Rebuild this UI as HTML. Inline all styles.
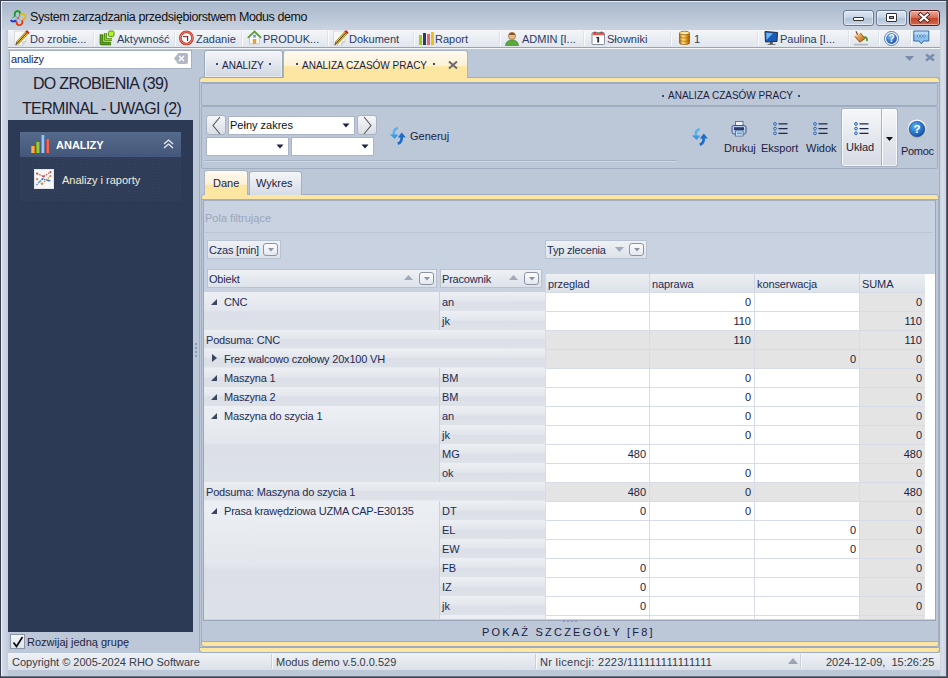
<!DOCTYPE html>
<html><head><meta charset="utf-8">
<style>
*{box-sizing:border-box;margin:0;padding:0}
html,body{width:948px;height:678px;overflow:hidden;background:#bcc7d8;font-family:"Liberation Sans",sans-serif;font-size:11px;color:#26345a}
.a{position:absolute}
.t{position:absolute;white-space:nowrap;line-height:1}
svg{position:absolute;overflow:visible}
</style></head><body>

<div class="a" style="left:0;top:0;width:948px;height:678px;background:#bcc7d8;border:1px solid #3a4252"></div>
<div class="a" style="left:1px;top:1px;width:946px;height:1px;background:#e9eef5"></div>
<div class="a" style="left:1px;top:1px;width:1px;height:676px;background:#eef2f7"></div>
<div class="a" style="left:2px;top:30px;width:6px;height:646px;background:linear-gradient(90deg,#d6dde8,#c3cddc)"></div>
<div class="a" style="left:1px;top:676px;width:946px;height:1px;background:#6a7282"></div>
<div class="a" style="left:946px;top:1px;width:1px;height:676px;background:#5a6272"></div>
<div class="a" style="left:2px;top:2px;width:944px;height:28px;background:linear-gradient(#a9b7cb,#c9d3e0)"></div>
<svg style="left:7px;top:7px" width="22" height="22" viewBox="0 0 24 24">
<path d="M9.5 10.5 L14 13.5 M13.8 9.8 L10.5 14" stroke="#a06a50" stroke-width="1" fill="none"/>
<path d="M5.5 12 L8 11 M13 10 L14.5 8" stroke="#3a8a9a" stroke-width=".9" fill="none"/>
<path d="M8.6 10.6 C7.6 6.4 9.6 4.2 11.6 4.3 C13.8 4.4 14.6 6.2 14.2 8.4" fill="none" stroke="#1a9a2a" stroke-width="2.1"/>
<path d="M14.6 8.2 C16 6.8 19.6 7 20.2 10 C20.6 12.2 19 13.6 16.8 13.4" fill="none" stroke="#e8b810" stroke-width="2.1"/>
<path d="M16.2 14.4 C17.4 16 17 19.8 13.4 19.8 C11 19.8 10 17.8 10.6 15.6" fill="none" stroke="#e04010" stroke-width="2.1"/>
<path d="M9.8 14.2 C8.6 16.4 5.2 16.4 4.2 14.2" fill="none" stroke="#1a3ad0" stroke-width="2.2"/>
</svg>
<div class="t" style="left:30px;top:11px;font-size:12.5px;letter-spacing:-0.4px;color:#111">System zarządzania przedsiębiorstwem Modus demo</div>
<div class="a" style="left:843px;top:10px;width:31px;height:16px;border:1px solid #6a7a92;border-radius:3px;background:linear-gradient(#dfe7f1 0%,#c9d6e6 45%,#b3c4d9 55%,#c8d6e6 100%);box-shadow:inset 0 0 0 1px rgba(255,255,255,.45)"></div>
<div class="a" style="left:876px;top:10px;width:31px;height:16px;border:1px solid #6a7a92;border-radius:3px;background:linear-gradient(#dfe7f1 0%,#c9d6e6 45%,#b3c4d9 55%,#c8d6e6 100%);box-shadow:inset 0 0 0 1px rgba(255,255,255,.45)"></div>
<div class="a" style="left:909px;top:10px;width:31px;height:16px;border:1px solid #5a2020;border-radius:3px;background:linear-gradient(#e9a99a 0%,#d9735f 45%,#c2442a 55%,#d06a4f 100%);box-shadow:inset 0 0 0 1px rgba(255,255,255,.45)"></div>
<div class="a" style="left:853px;top:17px;width:11px;height:4px;background:#fff;border:1px solid #333;border-radius:1px"></div>
<div class="a" style="left:886px;top:13px;width:11px;height:9px;background:#fff;border:1px solid #333;border-radius:1px"></div>
<div class="a" style="left:889px;top:16px;width:5px;height:3px;background:#8fa0b8;border:1px solid #333"></div>
<svg style="left:917px;top:12px" width="15" height="12" viewBox="0 0 15 12"><path d="M3.5 2.5 L10.5 8.5 M10.5 2.5 L3.5 8.5" stroke="#4a2020" stroke-width="3.8" stroke-linecap="square"/><path d="M3.5 2.5 L10.5 8.5 M10.5 2.5 L3.5 8.5" stroke="#fff" stroke-width="2.2" stroke-linecap="square"/></svg>
<div class="a" style="left:8px;top:30px;width:932px;height:17px;background:linear-gradient(#f3f5f8,#e1e6ed)"></div>
<div class="a" style="left:8px;top:47px;width:932px;height:1px;background:#9aa3b2"></div>
<div class="a" style="left:8px;top:48px;width:932px;height:1px;background:#f4f6f9"></div>
<div class="a" style="left:93px;top:31px;width:1px;height:15px;background:#dde2e9"></div>
<div class="a" style="left:94px;top:31px;width:1px;height:15px;background:#fafbfc"></div>
<div class="a" style="left:174px;top:31px;width:1px;height:15px;background:#dde2e9"></div>
<div class="a" style="left:175px;top:31px;width:1px;height:15px;background:#fafbfc"></div>
<div class="a" style="left:241px;top:31px;width:1px;height:15px;background:#dde2e9"></div>
<div class="a" style="left:242px;top:31px;width:1px;height:15px;background:#fafbfc"></div>
<div class="a" style="left:327px;top:31px;width:1px;height:15px;background:#dde2e9"></div>
<div class="a" style="left:328px;top:31px;width:1px;height:15px;background:#fafbfc"></div>
<div class="a" style="left:413px;top:31px;width:1px;height:15px;background:#dde2e9"></div>
<div class="a" style="left:414px;top:31px;width:1px;height:15px;background:#fafbfc"></div>
<div class="a" style="left:499px;top:31px;width:1px;height:15px;background:#dde2e9"></div>
<div class="a" style="left:500px;top:31px;width:1px;height:15px;background:#fafbfc"></div>
<div class="a" style="left:583px;top:31px;width:1px;height:15px;background:#dde2e9"></div>
<div class="a" style="left:584px;top:31px;width:1px;height:15px;background:#fafbfc"></div>
<div class="a" style="left:670px;top:31px;width:1px;height:15px;background:#dde2e9"></div>
<div class="a" style="left:671px;top:31px;width:1px;height:15px;background:#fafbfc"></div>
<div class="a" style="left:757px;top:31px;width:1px;height:15px;background:#dde2e9"></div>
<div class="a" style="left:758px;top:31px;width:1px;height:15px;background:#fafbfc"></div>
<div class="a" style="left:848px;top:31px;width:1px;height:15px;background:#dde2e9"></div>
<div class="a" style="left:849px;top:31px;width:1px;height:15px;background:#fafbfc"></div>
<div class="a" style="left:878px;top:31px;width:1px;height:15px;background:#dde2e9"></div>
<div class="a" style="left:879px;top:31px;width:1px;height:15px;background:#fafbfc"></div>
<div class="a" style="left:910px;top:31px;width:1px;height:15px;background:#dde2e9"></div>
<div class="a" style="left:911px;top:31px;width:1px;height:15px;background:#fafbfc"></div>
<div class="t" style="left:30px;top:34px;font-size:11px;color:#2b3a66">Do zrobie...</div>
<div class="t" style="left:117px;top:34px;font-size:11px;color:#2b3a66">Aktywność</div>
<div class="t" style="left:196px;top:34px;font-size:11px;color:#2b3a66">Zadanie</div>
<div class="t" style="left:263px;top:34px;font-size:11px;color:#2b3a66">PRODUK...</div>
<div class="t" style="left:349px;top:34px;font-size:11px;color:#2b3a66">Dokument</div>
<div class="t" style="left:435px;top:34px;font-size:11px;color:#2b3a66">Raport</div>
<div class="t" style="left:522px;top:34px;font-size:11px;color:#2b3a66">ADMIN [I...</div>
<div class="t" style="left:607px;top:34px;font-size:11px;color:#2b3a66">Słowniki</div>
<div class="t" style="left:694px;top:34px;font-size:11px;color:#2b3a66">1</div>
<div class="t" style="left:780px;top:34px;font-size:11px;color:#2b3a66">Paulina [I...</div>
<svg style="left:14px;top:30px" width="16" height="16" viewBox="0 0 16 16"><path d="M0.5 1 H12 V11.5 L8.5 15.5 H0.5 Z" fill="#f9f9f9" stroke="#d0d0d0" stroke-width=".8"/><path d="M8.5 15.5 L9 12 L12 11.5" fill="#e0e0e0" stroke="#b0b0b0" stroke-width=".7"/><path d="M3 13.5 L13.5 2" stroke="#8a6a10" stroke-width="3.6"/><path d="M3 13.5 L13.5 2" stroke="#f0c430" stroke-width="2.6"/><path d="M3.3 13.2 L13.3 2.2" stroke="#222" stroke-width=".9"/><path d="M12.3 0.8 L14.8 3.2" stroke="#e02020" stroke-width="2.2"/><path d="M1.8 14.8 L3.4 12.4" stroke="#555" stroke-width="1.4"/></svg>
<svg style="left:333px;top:30px" width="16" height="16" viewBox="0 0 16 16"><path d="M0.5 1 H12 V11.5 L8.5 15.5 H0.5 Z" fill="#f9f9f9" stroke="#d0d0d0" stroke-width=".8"/><path d="M8.5 15.5 L9 12 L12 11.5" fill="#e0e0e0" stroke="#b0b0b0" stroke-width=".7"/><path d="M3 13.5 L13.5 2" stroke="#8a6a10" stroke-width="3.6"/><path d="M3 13.5 L13.5 2" stroke="#f0c430" stroke-width="2.6"/><path d="M3.3 13.2 L13.3 2.2" stroke="#222" stroke-width=".9"/><path d="M12.3 0.8 L14.8 3.2" stroke="#e02020" stroke-width="2.2"/><path d="M1.8 14.8 L3.4 12.4" stroke="#555" stroke-width="1.4"/></svg>
<svg style="left:99px;top:30px" width="16" height="16" viewBox="0 0 16 16"><path d="M2.5 4.5 V13.5 H12" fill="none" stroke="#2a5a08" stroke-width="3.6" stroke-linejoin="round"/><path d="M2.5 4.5 V13.5 H12" fill="none" stroke="#5aa818" stroke-width="2.2"/><path d="M6.5 3 V9.5 H13" fill="none" stroke="#3a7010" stroke-width="3.2" stroke-linejoin="round"/><path d="M6.5 3 V9.5 H13" fill="none" stroke="#90d028" stroke-width="1.8"/><rect x="9.5" y="1" width="5.5" height="5.5" rx="1.3" fill="#b8f028" stroke="#4a8a10" stroke-width=".9"/></svg>
<svg style="left:179px;top:30px" width="16" height="16" viewBox="0 0 16 16"><circle cx="7.4" cy="7.9" r="6.1" fill="#fff" stroke="#c83a2a" stroke-width="2.7"/><circle cx="7.4" cy="7.9" r="6.1" fill="none" stroke="#f0a090" stroke-width=".7"/><path d="M4 6.6 H8.6" stroke="#c02828" stroke-width="1.1"/><path d="M8.6 6.1 V10.9" stroke="#2a3560" stroke-width="1.1"/></svg>
<svg style="left:247px;top:30px" width="15" height="15" viewBox="0 0 15 15"><path d="M2.5 7 L2.5 13.8 L12.5 13.8 L12.5 7 L7.5 2.5 Z" fill="#f8f8f8" stroke="#b8bcc4" stroke-width=".7"/><path d="M0.8 7.8 L7.5 1.5 L14.2 7.8" fill="none" stroke="#5aa030" stroke-width="1.7"/><rect x="6.2" y="4.6" width="2.6" height="3" fill="#6a9ae0"/><rect x="5.8" y="9" width="3.4" height="4.8" fill="#e8a030"/></svg>
<svg style="left:418px;top:31px" width="16" height="15" viewBox="0 0 16 15"><rect x="1" y="4" width="3" height="10" fill="#a8c820"/><rect x="5" y="2" width="3" height="12" fill="#2a3a5a"/><rect x="9" y="3" width="3" height="11" fill="#e06a6a"/><rect x="13" y="1" width="3" height="13" fill="#e8c020"/></svg>
<svg style="left:505px;top:31px" width="14" height="15" viewBox="0 0 14 15"><circle cx="7" cy="5" r="3.6" fill="#e8b888" stroke="#8a5a30" stroke-width=".6"/><path d="M4 3 Q7 0 10 3 L10 4 L4 4 Z" fill="#8a5a20"/><path d="M0.5 14.5 Q1 9 7 9 Q13 9 13.5 14.5 Z" fill="#5aaa3a" stroke="#3a7a2a" stroke-width=".6"/></svg>
<svg style="left:591px;top:30px" width="15" height="16" viewBox="0 0 15 16"><rect x="1" y="2.5" width="12.5" height="12" rx="1" fill="#fdfdfd" stroke="#7a8090" stroke-width=".9"/><rect x="1.5" y="3" width="11.5" height="2.2" fill="#e85a4a"/><circle cx="4" cy="2.5" r="1" fill="#c03020"/><circle cx="10.5" cy="2.5" r="1" fill="#c03020"/><rect x="6.3" y="7" width="1.8" height="5.5" fill="#2a2a3a"/><rect x="5.3" y="7" width="2" height="1.2" fill="#2a2a3a"/></svg>
<svg style="left:678px;top:30px" width="13" height="16" viewBox="0 0 13 16"><defs><linearGradient id="dbg" x1="0" x2="1"><stop offset="0" stop-color="#b86a08"/><stop offset=".35" stop-color="#ffe08a"/><stop offset=".6" stop-color="#f0b030"/><stop offset="1" stop-color="#a85a00"/></linearGradient></defs><path d="M1.5 3 V13 C1.5 15 11.5 15 11.5 13 V3 Z" fill="url(#dbg)" stroke="#8a5008" stroke-width=".7"/><ellipse cx="6.5" cy="3" rx="5" ry="1.8" fill="#ffe6a0" stroke="#8a5008" stroke-width=".7"/><path d="M1.5 6.6 C1.5 8.4 11.5 8.4 11.5 6.6 M1.5 10 C1.5 11.8 11.5 11.8 11.5 10" fill="none" stroke="#9a5a08" stroke-width=".6"/></svg>
<svg style="left:764px;top:30px" width="15" height="16" viewBox="0 0 15 16"><path d="M1 1.5 L13.5 2.5 L13 11.5 L1.5 12 Z" fill="#1a5ab8" stroke="#2a2a3a" stroke-width="1"/><path d="M2.2 2.8 L9 3.2 L2.5 10 Z" fill="#6ab8f0"/><path d="M6 12 L8.5 12 L9 14 L5.5 14 Z" fill="#555"/><path d="M3.5 14 H11.5 V15 H3.5 Z" fill="#777"/></svg>
<svg style="left:853px;top:30px" width="16" height="16" viewBox="0 0 16 16"><defs><linearGradient id="pk" x1="0" y1="0" x2="1" y2="1"><stop offset="0" stop-color="#ffd080"/><stop offset="1" stop-color="#b85a10"/></linearGradient></defs><path d="M1.8 6.5 L7.5 3 L12 8.5 L6.8 12.2 Z" fill="url(#pk)" stroke="#7a4010" stroke-width=".8"/><path d="M1.8 6.5 L7.5 3" stroke="#fff2c0" stroke-width="1"/><path d="M4.5 4.8 L3 1.2" stroke="#8a3a20" stroke-width="1.1"/><path d="M11.2 7.2 C13.6 7 14.4 8.6 13.8 11" fill="none" stroke="#3a9a20" stroke-width="1.8"/><rect x="1" y="13.8" width="14" height="1.6" fill="#b4b8be"/></svg>
<svg style="left:884px;top:31px" width="15" height="15" viewBox="0 0 15 15"><defs><radialGradient id="tq" cx=".4" cy=".35" r=".7"><stop offset="0" stop-color="#7ab8f0"/><stop offset="1" stop-color="#1a4ea8"/></radialGradient></defs><circle cx="7.5" cy="7.5" r="7" fill="#fafbfd" stroke="#3a5a98" stroke-width=".8"/><circle cx="7.5" cy="7.5" r="5.4" fill="url(#tq)"/><text x="7.5" y="11.3" font-size="10" font-weight="bold" text-anchor="middle" fill="#fff" font-family="Liberation Sans">?</text></svg>
<svg style="left:913px;top:30px" width="17" height="16" viewBox="0 0 17 16"><path d="M0.8 1 H15.8 V11 H10.5 L8.3 13.8 L6.1 11 H0.8 Z" fill="#8ac2ee" stroke="#2a5a9a" stroke-width=".9"/><rect x="1.5" y="1.7" width="13.6" height="3" fill="#b8dcf8"/><circle cx="5.5" cy="6" r="1.1" fill="#fff" stroke="#2a5a9a" stroke-width=".6"/><circle cx="8.3" cy="6" r="1.1" fill="#fff" stroke="#2a5a9a" stroke-width=".6"/><circle cx="11.1" cy="6" r="1.1" fill="#fff" stroke="#2a5a9a" stroke-width=".6"/></svg>
<div class="a" style="left:9px;top:50px;width:183px;height:19px;background:#fff;border:1px solid #a6b1c3"></div>
<div class="t" style="left:11px;top:54px;font-size:11px;letter-spacing:-0.2px;color:#1c2456">analizy</div>
<div class="a" style="left:174px;top:53px;width:14px;height:11px;background:#b0b8c4;border-radius:3px 2px 2px 3px;clip-path:polygon(30% 0,100% 0,100% 100%,30% 100%,0 50%)"></div>
<svg style="left:178px;top:55px" width="7" height="7" viewBox="0 0 7 7"><path d="M1 1 L6 6 M6 1 L1 6" stroke="#fff" stroke-width="1.4"/></svg>
<div class="t" style="left:33px;top:76px;font-size:16px;letter-spacing:-0.7px;color:#1c2030">DO ZROBIENIA (39)</div>
<div class="t" style="left:22px;top:101px;font-size:16px;letter-spacing:-0.65px;color:#1c2030">TERMINAL - UWAGI (2)</div>
<div class="a" style="left:8px;top:120px;width:185px;height:512px;background:#2c3a56"></div>
<div class="a" style="left:20px;top:132px;width:161px;height:25px;background:linear-gradient(#566a8c,#44577a)"></div>
<div class="a" style="left:20px;top:157px;width:161px;height:44px;background-color:#2e3c58;background-image:radial-gradient(circle at 1px 1px,#35435f 0.6px,transparent 0.8px);background-size:3px 3px"></div>
<svg style="left:30px;top:135px" width="21" height="19" viewBox="0 0 21 19"><defs><linearGradient id="bo" x1="0" x2="1"><stop offset="0" stop-color="#e07a20"/><stop offset=".5" stop-color="#ffc060"/><stop offset="1" stop-color="#d86a10"/></linearGradient><linearGradient id="bg" x1="0" x2="1"><stop offset="0" stop-color="#5a9a10"/><stop offset=".5" stop-color="#b0e050"/><stop offset="1" stop-color="#4a8a10"/></linearGradient><linearGradient id="bb" x1="0" x2="1"><stop offset="0" stop-color="#3a80c8"/><stop offset=".5" stop-color="#c0e0ff"/><stop offset="1" stop-color="#2a60a8"/></linearGradient><linearGradient id="br" x1="0" x2="1"><stop offset="0" stop-color="#c83020"/><stop offset=".5" stop-color="#f88070"/><stop offset="1" stop-color="#a82010"/></linearGradient></defs><rect x="1" y="11" width="4" height="7" fill="url(#bo)"/><rect x="6" y="7" width="4" height="11" fill="url(#bg)"/><rect x="11" y="0" width="4" height="18" fill="url(#bb)"/><rect x="16" y="4" width="4" height="14" fill="url(#br)"/></svg>
<div class="t" style="left:56px;top:140px;font-size:11px;font-weight:bold;color:#fff">ANALIZY</div>
<svg style="left:163px;top:139px" width="11" height="10" viewBox="0 0 11 10"><path d="M1 5 L5.5 1 L10 5 M1 9 L5.5 5 L10 9" fill="none" stroke="#e8ecf2" stroke-width="1.3"/></svg>
<svg style="left:34px;top:169px" width="20" height="20" viewBox="0 0 20 20"><rect x="0" y="0" width="20" height="20" fill="#f6f7f9"/><rect x="0.5" y="0.5" width="19" height="19" fill="none" stroke="#e2e6ec" stroke-width="1"/><g fill="none" stroke-width="1.1" stroke-dasharray="1.6 0.9"><path d="M3 4.5 L9.5 7.5 L16.5 3" stroke="#d04a3a"/><path d="M3 10 L8 15 L16.5 7" stroke="#e0803a"/><path d="M2.5 16 L8.5 10 L14.5 11.5 L17 12" stroke="#3a78c8"/></g><g><circle cx="3" cy="4.5" r="1.1" fill="#d04a3a"/><circle cx="9.5" cy="7.5" r="1.1" fill="#d04a3a"/><circle cx="16.5" cy="3" r="1.1" fill="#d04a3a"/><circle cx="3" cy="10" r="1.1" fill="#e0803a"/><circle cx="8" cy="15" r="1.1" fill="#e0803a"/><circle cx="16.5" cy="7" r="1.1" fill="#e0803a"/><circle cx="8.5" cy="10" r="1.1" fill="#3a78c8"/><circle cx="14.5" cy="11.5" r="1.1" fill="#3a78c8"/></g></svg>
<div class="t" style="left:62px;top:175px;font-size:11px;color:#f2eede">Analizy i raporty</div>
<div class="a" style="left:10px;top:634px;width:15px;height:15px;background:linear-gradient(#f4f6f9,#dfe4eb);border:1px solid #8a96a8"></div>
<svg style="left:12px;top:636px" width="12" height="12" viewBox="0 0 12 12"><path d="M1.5 6.5 L4.5 10.5 L10.5 1" fill="none" stroke="#111" stroke-width="1.8"/></svg>
<div class="t" style="left:27px;top:637px;font-size:11px;color:#1c2540">Rozwijaj jedną grupę</div>
<div class="a" style="left:195px;top:343px;width:2px;height:2px;background:#8a9ab8"></div>
<div class="a" style="left:195px;top:347px;width:2px;height:2px;background:#8a9ab8"></div>
<div class="a" style="left:195px;top:351px;width:2px;height:2px;background:#8a9ab8"></div>
<div class="a" style="left:195px;top:355px;width:2px;height:2px;background:#8a9ab8"></div>
<div class="a" style="left:8px;top:653px;width:932px;height:17px;background:linear-gradient(#eef1f5,#dce1e9)"></div>
<div class="a" style="left:271px;top:654px;width:1px;height:15px;background:#c9d0da"></div>
<div class="a" style="left:272px;top:654px;width:1px;height:15px;background:#f8f9fb"></div>
<div class="a" style="left:535px;top:654px;width:1px;height:15px;background:#c9d0da"></div>
<div class="a" style="left:536px;top:654px;width:1px;height:15px;background:#f8f9fb"></div>
<div class="a" style="left:800px;top:654px;width:1px;height:15px;background:#c9d0da"></div>
<div class="a" style="left:801px;top:654px;width:1px;height:15px;background:#f8f9fb"></div>
<div class="t" style="left:12px;top:657px;font-size:11px;color:#333a4a">Copyright © 2005-2024 RHO Software</div>
<div class="t" style="left:276px;top:657px;font-size:11px;color:#333a4a">Modus demo v.5.0.0.529</div>
<div class="t" style="left:540px;top:657px;font-size:11px;letter-spacing:0.32px;color:#333a4a">Nr licencji: 2223/111111111111111</div>
<div class="t" style="left:826px;top:657px;font-size:11px;color:#333a4a">2024-12-09,&nbsp; 15:26:25</div>
<svg style="left:788px;top:658px" width="10" height="6" viewBox="0 0 10 6"><path d="M0 6 L5 0 L10 6 Z" fill="#9aa4b4"/></svg>
<div class="a" style="left:940px;top:30px;width:6px;height:646px;background:linear-gradient(90deg,#ccd4e0,#d8dfe8 40%,#c8d1de)"></div>
<div class="a" style="left:199px;top:77px;width:741px;height:576px;background:#9fadc2;border-radius:3px"></div>
<div class="a" style="left:200px;top:78px;width:739px;height:574px;background:#fde6a2;border-radius:3px"></div>
<div class="a" style="left:200px;top:82px;width:739px;height:566px;background:#bcc7d8;border-top:1px solid #9eabbf;border-bottom:1px solid #9eabbf"></div>
<div class="a" style="left:204px;top:50px;width:79px;height:28px;border:1px solid #9aa6ba;border-radius:3px 3px 0 0;background:linear-gradient(#f4f6f9,#d0d7e2);box-shadow:inset 0 0 0 1px rgba(255,255,255,.5)"></div>
<div class="a" style="left:216px;top:63px;width:2px;height:2px;background:#3a4a70"></div>
<div class="a" style="left:269px;top:63px;width:2px;height:2px;background:#3a4a70"></div>
<div class="t" style="left:222px;top:61px;font-size:10px;color:#1a2240">ANALIZY</div>
<div class="a" style="left:283px;top:50px;width:185px;height:28px;border:1px solid #a9b4c4;border-bottom:none;border-radius:3px 3px 0 0;background:linear-gradient(#fffaf0 0%,#fdf1d6 55%,#fde6a2 58%,#fde6a2 100%)"></div>
<div class="a" style="left:284px;top:77px;width:183px;height:2px;background:#fde6a2"></div>
<div class="a" style="left:296px;top:63px;width:2px;height:2px;background:#3a4a70"></div>
<div class="a" style="left:433px;top:63px;width:2px;height:2px;background:#3a4a70"></div>
<div class="t" style="left:302px;top:61px;font-size:10px;color:#1a2240">ANALIZA CZASÓW PRACY</div>
<svg style="left:448px;top:61px" width="10" height="8" viewBox="0 0 10 8"><path d="M1 0.5 L9 7.5 M9 0.5 L1 7.5" stroke="#6a6a6a" stroke-width="2"/></svg>
<svg style="left:905px;top:56px" width="9" height="5" viewBox="0 0 9 5"><path d="M0 0 L9 0 L4.5 5 Z" fill="#7a8cab"/></svg>
<svg style="left:925px;top:54px" width="10" height="7" viewBox="0 0 10 7"><path d="M1 0.5 L9 6.5 M9 0.5 L1 6.5" stroke="#7a8cab" stroke-width="2.4"/></svg>
<div class="a" style="left:201px;top:83px;width:737px;height:23px;border:1px solid #a0adc0;border-radius:2px;background:#bcc7d8"></div>
<div class="a" style="left:662px;top:95px;width:2px;height:2px;background:#3a4a70"></div>
<div class="a" style="left:798px;top:95px;width:2px;height:2px;background:#3a4a70"></div>
<div class="t" style="left:668px;top:91px;font-size:10px;color:#1a2240">ANALIZA CZASÓW PRACY</div>
<div class="a" style="left:201px;top:106px;width:737px;height:63px;border:1px solid #a0adc0;border-radius:2px;background:#bcc7d8"></div>
<div class="a" style="left:205px;top:160px;width:472px;height:1px;background:#a6b2c4"></div>
<div class="a" style="left:205px;top:161px;width:472px;height:1px;background:#d2d9e4"></div>
<div class="a" style="left:206px;top:115px;width:20px;height:20px;border:1px solid #a9b3c2;border-radius:3px;background:linear-gradient(#f6f7f9,#d9dee6)"></div>
<svg style="left:211px;top:116px" width="11" height="19" viewBox="0 0 11 19"><path d="M9 1 L2 9.5 L9 18" fill="none" stroke="#555" stroke-width="1.1"/></svg>
<div class="a" style="left:357px;top:115px;width:20px;height:20px;border:1px solid #a9b3c2;border-radius:3px;background:linear-gradient(#f6f7f9,#d9dee6)"></div>
<svg style="left:362px;top:116px" width="11" height="19" viewBox="0 0 11 19"><path d="M2 1 L9 9.5 L2 18" fill="none" stroke="#555" stroke-width="1.1"/></svg>
<div class="a" style="left:228px;top:116px;width:127px;height:19px;background:#fff;border:1px solid #aab4c3"></div>
<div class="t" style="left:230px;top:120px;font-size:11px;color:#111">Pełny zakres</div>
<svg style="left:342px;top:123px" width="8" height="5" viewBox="0 0 8 5"><path d="M0.5 0.5 L7.5 0.5 L4 4.5 Z" fill="#1a2240"/></svg>
<div class="a" style="left:206px;top:137px;width:83px;height:19px;background:#fff;border:1px solid #aab4c3"></div>
<svg style="left:276px;top:144px" width="8" height="5" viewBox="0 0 8 5"><path d="M0.5 0.5 L7.5 0.5 L4 4.5 Z" fill="#1a2240"/></svg>
<div class="a" style="left:291px;top:137px;width:83px;height:19px;background:#fff;border:1px solid #aab4c3"></div>
<svg style="left:361px;top:144px" width="8" height="5" viewBox="0 0 8 5"><path d="M0.5 0.5 L7.5 0.5 L4 4.5 Z" fill="#1a2240"/></svg>
<svg style="left:389px;top:127px" width="18" height="18" viewBox="0 0 18 18"><path d="M8.8 1 C5.5 1.8 4.2 4.5 5 7.8" fill="none" stroke="#5ab2ec" stroke-width="2.6"/><path d="M0.8 7.4 L9.4 7.4 L5.8 12 Z" fill="#3a9ae4"/><path d="M12.6 9.8 C13 13.2 11.8 15.5 8.8 16.8" fill="none" stroke="#1a6cc8" stroke-width="2.6"/><path d="M8.8 10.6 L16.8 10.6 L12.8 5.6 Z" fill="#1a6cc8"/></svg>
<div class="t" style="left:410px;top:131px;font-size:11px;color:#1a2240">Generuj</div>
<svg style="left:691px;top:128px" width="18" height="18" viewBox="0 0 18 18"><path d="M8.8 1 C5.5 1.8 4.2 4.5 5 7.8" fill="none" stroke="#5ab2ec" stroke-width="2.6"/><path d="M0.8 7.4 L9.4 7.4 L5.8 12 Z" fill="#3a9ae4"/><path d="M12.6 9.8 C13 13.2 11.8 15.5 8.8 16.8" fill="none" stroke="#1a6cc8" stroke-width="2.6"/><path d="M8.8 10.6 L16.8 10.6 L12.8 5.6 Z" fill="#1a6cc8"/></svg>
<svg style="left:731px;top:120px" width="16" height="17" viewBox="0 0 16 17"><rect x="4.5" y="1.5" width="7.5" height="7" fill="#eef2f8" stroke="#5a6a90" stroke-width=".9"/><rect x="1" y="5.5" width="14" height="8.5" rx="1.8" fill="#b8d0f0" stroke="#34447a" stroke-width=".9"/><rect x="3" y="7.2" width="10" height="3" fill="#2a3a6a"/><rect x="4.5" y="11" width="7.5" height="5" fill="#fff" stroke="#5a6a90" stroke-width=".9"/><rect x="5.5" y="12.3" width="5.5" height="2.2" fill="#5aa8ea"/></svg>
<svg style="left:772px;top:121px" width="16" height="15" viewBox="0 0 16 15"><circle cx="3" cy="2.9" r="1.4" fill="#a8d8f4" stroke="#2a5aa8" stroke-width=".9"/><circle cx="3" cy="7.6" r="1.4" fill="#a8d8f4" stroke="#2a5aa8" stroke-width=".9"/><circle cx="3" cy="12.3" r="1.4" fill="#a8d8f4" stroke="#2a5aa8" stroke-width=".9"/><path d="M6.5 2.9 H15.5 M6.5 7.6 H15.5 M6.5 12.3 H15.5" stroke="#1a2848" stroke-width="1.3"/></svg>
<svg style="left:812px;top:121px" width="16" height="15" viewBox="0 0 16 15"><circle cx="3" cy="2.9" r="1.4" fill="#a8d8f4" stroke="#2a5aa8" stroke-width=".9"/><circle cx="3" cy="7.6" r="1.4" fill="#a8d8f4" stroke="#2a5aa8" stroke-width=".9"/><circle cx="3" cy="12.3" r="1.4" fill="#a8d8f4" stroke="#2a5aa8" stroke-width=".9"/><path d="M6.5 2.9 H15.5 M6.5 7.6 H15.5 M6.5 12.3 H15.5" stroke="#1a2848" stroke-width="1.3"/></svg>
<div class="a" style="left:841px;top:108px;width:57px;height:59px;border:1px solid #a9b2c0;border-radius:3px;background:linear-gradient(#f6f7f9,#e4e8ee 50%,#d6dbe4);box-shadow:inset 0 0 0 1px rgba(255,255,255,.7)"></div>
<div class="a" style="left:881px;top:109px;width:1px;height:57px;background:#a9b2c0"></div>
<div class="a" style="left:882px;top:109px;width:1px;height:57px;background:#fafbfc"></div>
<svg style="left:853px;top:121px" width="16" height="15" viewBox="0 0 16 15"><circle cx="3" cy="2.9" r="1.4" fill="#a8d8f4" stroke="#2a5aa8" stroke-width=".9"/><circle cx="3" cy="7.6" r="1.4" fill="#a8d8f4" stroke="#2a5aa8" stroke-width=".9"/><circle cx="3" cy="12.3" r="1.4" fill="#a8d8f4" stroke="#2a5aa8" stroke-width=".9"/><path d="M6.5 2.9 H15.5 M6.5 7.6 H15.5 M6.5 12.3 H15.5" stroke="#1a2848" stroke-width="1.3"/></svg>
<svg style="left:886px;top:137px" width="7" height="4" viewBox="0 0 7 4"><path d="M0 0 L7 0 L3.5 4 Z" fill="#111"/></svg>
<svg style="left:907px;top:119px" width="20" height="20" viewBox="0 0 20 20"><defs><radialGradient id="hb" cx=".4" cy=".35" r=".7"><stop offset="0" stop-color="#5ab4f8"/><stop offset="1" stop-color="#0c4aa8"/></radialGradient><linearGradient id="hr" x1="0" y1="0" x2="0" y2="1"><stop offset="0" stop-color="#ffffff"/><stop offset="1" stop-color="#b8b8b8"/></linearGradient></defs><circle cx="10" cy="10" r="9.6" fill="url(#hr)"/><circle cx="10" cy="10" r="7.8" fill="url(#hb)" stroke="#0a3a80" stroke-width=".5"/><text x="10" y="14.3" font-size="11.5" font-weight="bold" text-anchor="middle" fill="#fff" font-family="Liberation Sans">?</text></svg>
<div class="t" style="left:724px;top:143px;font-size:11px;letter-spacing:0;color:#1a2240">Drukuj</div>
<div class="t" style="left:761px;top:143px;font-size:11px;letter-spacing:0;color:#1a2240">Eksport</div>
<div class="t" style="left:806px;top:143px;font-size:11px;letter-spacing:0;color:#1a2240">Widok</div>
<div class="t" style="left:846px;top:142px;font-size:11px;letter-spacing:0;color:#1a2240">Układ</div>
<div class="t" style="left:901px;top:146px;font-size:11px;letter-spacing:-0.3px;color:#1a2240">Pomoc</div>
<div class="a" style="left:201px;top:194px;width:738px;height:453px;background:#fde6a2;border:1px solid #a0adc0;border-radius:3px"></div>
<div class="a" style="left:202px;top:199px;width:736px;height:443px;background:#bcc7d8;border-top:1px solid #a0adc0;border-bottom:1px solid #a0adc0"></div>
<div class="a" style="left:204px;top:170px;width:44px;height:25px;border:1px solid #a9b4c4;border-bottom:none;border-radius:3px 3px 0 0;background:linear-gradient(#fffaf0 0%,#fdf1d6 55%,#fde6a2 60%,#fde6a2 100%)"></div>
<div class="a" style="left:249px;top:171px;width:53px;height:24px;border:1px solid #a6b2c4;border-bottom:none;border-radius:3px 3px 0 0;background:linear-gradient(#f4f6f9,#d5dbe5)"></div>
<div class="t" style="left:213px;top:178px;font-size:11px;color:#1a2240">Dane</div>
<div class="t" style="left:256px;top:178px;font-size:11px;color:#1a2240">Wykres</div>
<div class="a" style="left:203px;top:199px;width:733px;height:422px;background:#c9d2e0;border:1px solid #9aa7bb;border-top:2px solid #a4b0c2"></div>
<div class="t" style="left:205px;top:213px;font-size:11px;color:#9aa6ba">Pola filtrujące</div>
<div class="a" style="left:205px;top:232px;width:728px;height:1px;background:#bcc5d3"></div>
<div class="a" style="left:207px;top:240px;width:74px;height:19px;border:1px solid #b9c2d0;background:linear-gradient(#eef1f5,#dde2ea)"></div>
<div class="t" style="left:209px;top:245px;font-size:11px;letter-spacing:-0.2px;color:#1f2c52">Czas [min]</div>
<div class="a" style="left:263px;top:243px;width:15px;height:13px;border:1px solid #8a94a4;border-radius:3px;background:linear-gradient(#fafbfc,#e4e8ee)"></div>
<svg style="left:268px;top:248px" width="6" height="4" viewBox="0 0 6 4"><path d="M0 0 L6 0 L3 3.5 Z" fill="#8a94a4"/></svg>
<div class="a" style="left:545px;top:240px;width:102px;height:19px;border:1px solid #b9c2d0;background:linear-gradient(#eef1f5,#dde2ea)"></div>
<div class="t" style="left:547px;top:245px;font-size:11px;letter-spacing:-0.2px;color:#1f2c52">Typ zlecenia</div>
<svg style="left:615px;top:247px" width="9" height="5" viewBox="0 0 9 5"><path d="M0 0 L9 0 L4.5 5 Z" fill="#a0aab8"/></svg>
<div class="a" style="left:629px;top:243px;width:15px;height:13px;border:1px solid #8a94a4;border-radius:3px;background:linear-gradient(#fafbfc,#e4e8ee)"></div>
<svg style="left:634px;top:248px" width="6" height="4" viewBox="0 0 6 4"><path d="M0 0 L6 0 L3 3.5 Z" fill="#8a94a4"/></svg>
<div class="a" style="left:207px;top:269px;width:230px;height:19px;border:1px solid #b9c2d0;background:linear-gradient(#eef1f5,#dde2ea)"></div>
<div class="t" style="left:209px;top:274px;font-size:11px;letter-spacing:-0.2px;color:#1f2c52">Obiekt</div>
<svg style="left:404px;top:275px" width="9" height="5" viewBox="0 0 9 5"><path d="M0 5 L9 5 L4.5 0 Z" fill="#a0aab8"/></svg>
<div class="a" style="left:419px;top:272px;width:15px;height:13px;border:1px solid #8a94a4;border-radius:3px;background:linear-gradient(#fafbfc,#e4e8ee)"></div>
<svg style="left:424px;top:277px" width="6" height="4" viewBox="0 0 6 4"><path d="M0 0 L6 0 L3 3.5 Z" fill="#8a94a4"/></svg>
<div class="a" style="left:440px;top:269px;width:102px;height:19px;border:1px solid #b9c2d0;background:linear-gradient(#eef1f5,#dde2ea)"></div>
<div class="t" style="left:442px;top:274px;font-size:11px;letter-spacing:-0.2px;color:#1f2c52">Pracownik</div>
<svg style="left:509px;top:275px" width="9" height="5" viewBox="0 0 9 5"><path d="M0 5 L9 5 L4.5 0 Z" fill="#a0aab8"/></svg>
<div class="a" style="left:524px;top:272px;width:15px;height:13px;border:1px solid #8a94a4;border-radius:3px;background:linear-gradient(#fafbfc,#e4e8ee)"></div>
<svg style="left:529px;top:277px" width="6" height="4" viewBox="0 0 6 4"><path d="M0 0 L6 0 L3 3.5 Z" fill="#8a94a4"/></svg>
<div class="a" style="left:545px;top:274px;width:104px;height:18px;background:linear-gradient(#eceff3,#dde2ea);border-left:1px solid #d0d6df"></div>
<div class="t" style="left:548px;top:279px;font-size:11px;letter-spacing:-0.1px;color:#1f2c52">przeglad</div>
<div class="a" style="left:649px;top:274px;width:105px;height:18px;background:linear-gradient(#eceff3,#dde2ea);border-left:1px solid #d0d6df"></div>
<div class="t" style="left:652px;top:279px;font-size:11px;letter-spacing:-0.1px;color:#1f2c52">naprawa</div>
<div class="a" style="left:754px;top:274px;width:105px;height:18px;background:linear-gradient(#eceff3,#dde2ea);border-left:1px solid #d0d6df"></div>
<div class="t" style="left:757px;top:279px;font-size:11px;letter-spacing:-0.1px;color:#1f2c52">konserwacja</div>
<div class="a" style="left:859px;top:274px;width:66px;height:18px;background:linear-gradient(#eceff3,#dde2ea);border-left:1px solid #d0d6df"></div>
<div class="t" style="left:862px;top:279px;font-size:11px;letter-spacing:-0.1px;color:#1f2c52">SUMA</div>
<div class="a" style="left:925px;top:274px;width:10px;height:345px;background:#fff"></div>
<div style="position:absolute;left:204px;top:292px;width:732px;height:327px;overflow:hidden">
<div class="a" style="left:0;top:0px;width:235px;height:38px;background:linear-gradient(#eceff3 0%,#e3e7ed 48%,#dcdfe7 52%,#dde1e8 100%)"></div>
<div class="t" style="left:20px;top:5px;font-size:11px;letter-spacing:-0.2px;color:#1f2c52">CNC</div>
<svg style="left:7px;top:7px" width="6" height="6" viewBox="0 0 6 6"><path d="M6 0 L6 6 L0 6 Z" fill="#3a4660"/></svg>
<div class="a" style="left:236px;top:0px;width:105px;height:19px;background:linear-gradient(#eceff3 0%,#e3e7ed 48%,#dcdfe7 52%,#dde1e8 100%)"></div>
<div class="t" style="left:238px;top:5px;font-size:11px;color:#1f2c52">an</div>
<div class="a" style="left:341px;top:0px;width:104px;height:19px;background:#fff;border-left:1px solid #d8dce6;border-top:1px solid #d8dce6"></div>
<div class="a" style="left:445px;top:0px;width:105px;height:19px;background:#fff;border-left:1px solid #d8dce6;border-top:1px solid #d8dce6"></div>
<div class="t" style="left:445px;top:5px;width:102px;text-align:right;font-size:11px;color:#1a2240">0</div>
<div class="a" style="left:550px;top:0px;width:105px;height:19px;background:#fff;border-left:1px solid #d8dce6;border-top:1px solid #d8dce6"></div>
<div class="a" style="left:655px;top:0px;width:66px;height:19px;background:#e4e4e4;border-left:1px solid #d8dce6;border-top:1px solid #d8dce6"></div>
<div class="t" style="left:655px;top:5px;width:63px;text-align:right;font-size:11px;color:#1a2240">0</div>
<div class="a" style="left:236px;top:19px;width:105px;height:19px;background:linear-gradient(#eceff3 0%,#e3e7ed 48%,#dcdfe7 52%,#dde1e8 100%)"></div>
<div class="t" style="left:238px;top:24px;font-size:11px;color:#1f2c52">jk</div>
<div class="a" style="left:341px;top:19px;width:104px;height:19px;background:#fff;border-left:1px solid #d8dce6;border-top:1px solid #d8dce6"></div>
<div class="a" style="left:445px;top:19px;width:105px;height:19px;background:#fff;border-left:1px solid #d8dce6;border-top:1px solid #d8dce6"></div>
<div class="t" style="left:445px;top:24px;width:102px;text-align:right;font-size:11px;color:#1a2240">110</div>
<div class="a" style="left:550px;top:19px;width:105px;height:19px;background:#fff;border-left:1px solid #d8dce6;border-top:1px solid #d8dce6"></div>
<div class="a" style="left:655px;top:19px;width:66px;height:19px;background:#e4e4e4;border-left:1px solid #d8dce6;border-top:1px solid #d8dce6"></div>
<div class="t" style="left:655px;top:24px;width:63px;text-align:right;font-size:11px;color:#1a2240">110</div>
<div class="a" style="left:0;top:38px;width:341px;height:19px;background:linear-gradient(#eceff3 0%,#e3e7ed 48%,#dcdfe7 52%,#dde1e8 100%);border-bottom:1px solid #e6e9ee"></div>
<div class="t" style="left:2px;top:43px;font-size:11px;letter-spacing:-0.2px;color:#1f2c52">Podsuma: CNC</div>
<div class="a" style="left:341px;top:38px;width:104px;height:19px;background:#e4e4e4;border-left:1px solid #d8dce6;border-top:1px solid #d8dce6"></div>
<div class="a" style="left:445px;top:38px;width:105px;height:19px;background:#e4e4e4;border-left:1px solid #d8dce6;border-top:1px solid #d8dce6"></div>
<div class="t" style="left:445px;top:43px;width:102px;text-align:right;font-size:11px;color:#1a2240">110</div>
<div class="a" style="left:550px;top:38px;width:105px;height:19px;background:#e4e4e4;border-left:1px solid #d8dce6;border-top:1px solid #d8dce6"></div>
<div class="a" style="left:655px;top:38px;width:66px;height:19px;background:#e4e4e4;border-left:1px solid #d8dce6;border-top:1px solid #d8dce6"></div>
<div class="t" style="left:655px;top:43px;width:63px;text-align:right;font-size:11px;color:#1a2240">110</div>
<div class="a" style="left:0;top:57px;width:341px;height:19px;background:linear-gradient(#eceff3 0%,#e3e7ed 48%,#dcdfe7 52%,#dde1e8 100%);border-bottom:1px solid #e6e9ee"></div>
<div class="t" style="left:20px;top:62px;font-size:11px;letter-spacing:-0.2px;color:#1f2c52">Frez walcowo czołowy 20x100 VH</div>
<svg style="left:8px;top:62px" width="5" height="8" viewBox="0 0 5 8"><path d="M0 0 L5 4 L0 8 Z" fill="#3a4660"/></svg>
<div class="a" style="left:341px;top:57px;width:104px;height:19px;background:#e4e4e4;border-left:1px solid #d8dce6;border-top:1px solid #d8dce6"></div>
<div class="a" style="left:445px;top:57px;width:105px;height:19px;background:#e4e4e4;border-left:1px solid #d8dce6;border-top:1px solid #d8dce6"></div>
<div class="a" style="left:550px;top:57px;width:105px;height:19px;background:#e4e4e4;border-left:1px solid #d8dce6;border-top:1px solid #d8dce6"></div>
<div class="t" style="left:550px;top:62px;width:102px;text-align:right;font-size:11px;color:#1a2240">0</div>
<div class="a" style="left:655px;top:57px;width:66px;height:19px;background:#e4e4e4;border-left:1px solid #d8dce6;border-top:1px solid #d8dce6"></div>
<div class="t" style="left:655px;top:62px;width:63px;text-align:right;font-size:11px;color:#1a2240">0</div>
<div class="a" style="left:0;top:76px;width:235px;height:19px;background:linear-gradient(#eceff3 0%,#e3e7ed 48%,#dcdfe7 52%,#dde1e8 100%)"></div>
<div class="t" style="left:20px;top:81px;font-size:11px;letter-spacing:-0.2px;color:#1f2c52">Maszyna 1</div>
<svg style="left:7px;top:83px" width="6" height="6" viewBox="0 0 6 6"><path d="M6 0 L6 6 L0 6 Z" fill="#3a4660"/></svg>
<div class="a" style="left:236px;top:76px;width:105px;height:19px;background:linear-gradient(#eceff3 0%,#e3e7ed 48%,#dcdfe7 52%,#dde1e8 100%)"></div>
<div class="t" style="left:238px;top:81px;font-size:11px;color:#1f2c52">BM</div>
<div class="a" style="left:341px;top:76px;width:104px;height:19px;background:#fff;border-left:1px solid #d8dce6;border-top:1px solid #d8dce6"></div>
<div class="a" style="left:445px;top:76px;width:105px;height:19px;background:#fff;border-left:1px solid #d8dce6;border-top:1px solid #d8dce6"></div>
<div class="t" style="left:445px;top:81px;width:102px;text-align:right;font-size:11px;color:#1a2240">0</div>
<div class="a" style="left:550px;top:76px;width:105px;height:19px;background:#fff;border-left:1px solid #d8dce6;border-top:1px solid #d8dce6"></div>
<div class="a" style="left:655px;top:76px;width:66px;height:19px;background:#e4e4e4;border-left:1px solid #d8dce6;border-top:1px solid #d8dce6"></div>
<div class="t" style="left:655px;top:81px;width:63px;text-align:right;font-size:11px;color:#1a2240">0</div>
<div class="a" style="left:0;top:95px;width:235px;height:19px;background:linear-gradient(#eceff3 0%,#e3e7ed 48%,#dcdfe7 52%,#dde1e8 100%)"></div>
<div class="t" style="left:20px;top:100px;font-size:11px;letter-spacing:-0.2px;color:#1f2c52">Maszyna 2</div>
<svg style="left:7px;top:102px" width="6" height="6" viewBox="0 0 6 6"><path d="M6 0 L6 6 L0 6 Z" fill="#3a4660"/></svg>
<div class="a" style="left:236px;top:95px;width:105px;height:19px;background:linear-gradient(#eceff3 0%,#e3e7ed 48%,#dcdfe7 52%,#dde1e8 100%)"></div>
<div class="t" style="left:238px;top:100px;font-size:11px;color:#1f2c52">BM</div>
<div class="a" style="left:341px;top:95px;width:104px;height:19px;background:#fff;border-left:1px solid #d8dce6;border-top:1px solid #d8dce6"></div>
<div class="a" style="left:445px;top:95px;width:105px;height:19px;background:#fff;border-left:1px solid #d8dce6;border-top:1px solid #d8dce6"></div>
<div class="t" style="left:445px;top:100px;width:102px;text-align:right;font-size:11px;color:#1a2240">0</div>
<div class="a" style="left:550px;top:95px;width:105px;height:19px;background:#fff;border-left:1px solid #d8dce6;border-top:1px solid #d8dce6"></div>
<div class="a" style="left:655px;top:95px;width:66px;height:19px;background:#e4e4e4;border-left:1px solid #d8dce6;border-top:1px solid #d8dce6"></div>
<div class="t" style="left:655px;top:100px;width:63px;text-align:right;font-size:11px;color:#1a2240">0</div>
<div class="a" style="left:0;top:114px;width:235px;height:76px;background:linear-gradient(#eceff3 0%,#e3e7ed 48%,#dcdfe7 52%,#dde1e8 100%)"></div>
<div class="t" style="left:20px;top:119px;font-size:11px;letter-spacing:-0.2px;color:#1f2c52">Maszyna do szycia 1</div>
<svg style="left:7px;top:121px" width="6" height="6" viewBox="0 0 6 6"><path d="M6 0 L6 6 L0 6 Z" fill="#3a4660"/></svg>
<div class="a" style="left:236px;top:114px;width:105px;height:19px;background:linear-gradient(#eceff3 0%,#e3e7ed 48%,#dcdfe7 52%,#dde1e8 100%)"></div>
<div class="t" style="left:238px;top:119px;font-size:11px;color:#1f2c52">an</div>
<div class="a" style="left:341px;top:114px;width:104px;height:19px;background:#fff;border-left:1px solid #d8dce6;border-top:1px solid #d8dce6"></div>
<div class="a" style="left:445px;top:114px;width:105px;height:19px;background:#fff;border-left:1px solid #d8dce6;border-top:1px solid #d8dce6"></div>
<div class="t" style="left:445px;top:119px;width:102px;text-align:right;font-size:11px;color:#1a2240">0</div>
<div class="a" style="left:550px;top:114px;width:105px;height:19px;background:#fff;border-left:1px solid #d8dce6;border-top:1px solid #d8dce6"></div>
<div class="a" style="left:655px;top:114px;width:66px;height:19px;background:#e4e4e4;border-left:1px solid #d8dce6;border-top:1px solid #d8dce6"></div>
<div class="t" style="left:655px;top:119px;width:63px;text-align:right;font-size:11px;color:#1a2240">0</div>
<div class="a" style="left:236px;top:133px;width:105px;height:19px;background:linear-gradient(#eceff3 0%,#e3e7ed 48%,#dcdfe7 52%,#dde1e8 100%)"></div>
<div class="t" style="left:238px;top:138px;font-size:11px;color:#1f2c52">jk</div>
<div class="a" style="left:341px;top:133px;width:104px;height:19px;background:#fff;border-left:1px solid #d8dce6;border-top:1px solid #d8dce6"></div>
<div class="a" style="left:445px;top:133px;width:105px;height:19px;background:#fff;border-left:1px solid #d8dce6;border-top:1px solid #d8dce6"></div>
<div class="t" style="left:445px;top:138px;width:102px;text-align:right;font-size:11px;color:#1a2240">0</div>
<div class="a" style="left:550px;top:133px;width:105px;height:19px;background:#fff;border-left:1px solid #d8dce6;border-top:1px solid #d8dce6"></div>
<div class="a" style="left:655px;top:133px;width:66px;height:19px;background:#e4e4e4;border-left:1px solid #d8dce6;border-top:1px solid #d8dce6"></div>
<div class="t" style="left:655px;top:138px;width:63px;text-align:right;font-size:11px;color:#1a2240">0</div>
<div class="a" style="left:236px;top:152px;width:105px;height:19px;background:linear-gradient(#eceff3 0%,#e3e7ed 48%,#dcdfe7 52%,#dde1e8 100%)"></div>
<div class="t" style="left:238px;top:157px;font-size:11px;color:#1f2c52">MG</div>
<div class="a" style="left:341px;top:152px;width:104px;height:19px;background:#fff;border-left:1px solid #d8dce6;border-top:1px solid #d8dce6"></div>
<div class="t" style="left:341px;top:157px;width:101px;text-align:right;font-size:11px;color:#1a2240">480</div>
<div class="a" style="left:445px;top:152px;width:105px;height:19px;background:#fff;border-left:1px solid #d8dce6;border-top:1px solid #d8dce6"></div>
<div class="a" style="left:550px;top:152px;width:105px;height:19px;background:#fff;border-left:1px solid #d8dce6;border-top:1px solid #d8dce6"></div>
<div class="a" style="left:655px;top:152px;width:66px;height:19px;background:#e4e4e4;border-left:1px solid #d8dce6;border-top:1px solid #d8dce6"></div>
<div class="t" style="left:655px;top:157px;width:63px;text-align:right;font-size:11px;color:#1a2240">480</div>
<div class="a" style="left:236px;top:171px;width:105px;height:19px;background:linear-gradient(#eceff3 0%,#e3e7ed 48%,#dcdfe7 52%,#dde1e8 100%)"></div>
<div class="t" style="left:238px;top:176px;font-size:11px;color:#1f2c52">ok</div>
<div class="a" style="left:341px;top:171px;width:104px;height:19px;background:#fff;border-left:1px solid #d8dce6;border-top:1px solid #d8dce6"></div>
<div class="a" style="left:445px;top:171px;width:105px;height:19px;background:#fff;border-left:1px solid #d8dce6;border-top:1px solid #d8dce6"></div>
<div class="t" style="left:445px;top:176px;width:102px;text-align:right;font-size:11px;color:#1a2240">0</div>
<div class="a" style="left:550px;top:171px;width:105px;height:19px;background:#fff;border-left:1px solid #d8dce6;border-top:1px solid #d8dce6"></div>
<div class="a" style="left:655px;top:171px;width:66px;height:19px;background:#e4e4e4;border-left:1px solid #d8dce6;border-top:1px solid #d8dce6"></div>
<div class="t" style="left:655px;top:176px;width:63px;text-align:right;font-size:11px;color:#1a2240">0</div>
<div class="a" style="left:0;top:190px;width:341px;height:19px;background:linear-gradient(#eceff3 0%,#e3e7ed 48%,#dcdfe7 52%,#dde1e8 100%);border-bottom:1px solid #e6e9ee"></div>
<div class="t" style="left:2px;top:195px;font-size:11px;letter-spacing:-0.2px;color:#1f2c52">Podsuma: Maszyna do szycia 1</div>
<div class="a" style="left:341px;top:190px;width:104px;height:19px;background:#e4e4e4;border-left:1px solid #d8dce6;border-top:1px solid #d8dce6"></div>
<div class="t" style="left:341px;top:195px;width:101px;text-align:right;font-size:11px;color:#1a2240">480</div>
<div class="a" style="left:445px;top:190px;width:105px;height:19px;background:#e4e4e4;border-left:1px solid #d8dce6;border-top:1px solid #d8dce6"></div>
<div class="t" style="left:445px;top:195px;width:102px;text-align:right;font-size:11px;color:#1a2240">0</div>
<div class="a" style="left:550px;top:190px;width:105px;height:19px;background:#e4e4e4;border-left:1px solid #d8dce6;border-top:1px solid #d8dce6"></div>
<div class="a" style="left:655px;top:190px;width:66px;height:19px;background:#e4e4e4;border-left:1px solid #d8dce6;border-top:1px solid #d8dce6"></div>
<div class="t" style="left:655px;top:195px;width:63px;text-align:right;font-size:11px;color:#1a2240">480</div>
<div class="a" style="left:0;top:209px;width:235px;height:133px;background:linear-gradient(#eceff3 0%,#e3e7ed 48%,#dcdfe7 52%,#dde1e8 100%)"></div>
<div class="t" style="left:20px;top:214px;font-size:11px;letter-spacing:-0.2px;color:#1f2c52">Prasa krawędziowa UZMA CAP-E30135</div>
<svg style="left:7px;top:216px" width="6" height="6" viewBox="0 0 6 6"><path d="M6 0 L6 6 L0 6 Z" fill="#3a4660"/></svg>
<div class="a" style="left:236px;top:209px;width:105px;height:19px;background:linear-gradient(#eceff3 0%,#e3e7ed 48%,#dcdfe7 52%,#dde1e8 100%)"></div>
<div class="t" style="left:238px;top:214px;font-size:11px;color:#1f2c52">DT</div>
<div class="a" style="left:341px;top:209px;width:104px;height:19px;background:#fff;border-left:1px solid #d8dce6;border-top:1px solid #d8dce6"></div>
<div class="t" style="left:341px;top:214px;width:101px;text-align:right;font-size:11px;color:#1a2240">0</div>
<div class="a" style="left:445px;top:209px;width:105px;height:19px;background:#fff;border-left:1px solid #d8dce6;border-top:1px solid #d8dce6"></div>
<div class="t" style="left:445px;top:214px;width:102px;text-align:right;font-size:11px;color:#1a2240">0</div>
<div class="a" style="left:550px;top:209px;width:105px;height:19px;background:#fff;border-left:1px solid #d8dce6;border-top:1px solid #d8dce6"></div>
<div class="a" style="left:655px;top:209px;width:66px;height:19px;background:#e4e4e4;border-left:1px solid #d8dce6;border-top:1px solid #d8dce6"></div>
<div class="t" style="left:655px;top:214px;width:63px;text-align:right;font-size:11px;color:#1a2240">0</div>
<div class="a" style="left:236px;top:228px;width:105px;height:19px;background:linear-gradient(#eceff3 0%,#e3e7ed 48%,#dcdfe7 52%,#dde1e8 100%)"></div>
<div class="t" style="left:238px;top:233px;font-size:11px;color:#1f2c52">EL</div>
<div class="a" style="left:341px;top:228px;width:104px;height:19px;background:#fff;border-left:1px solid #d8dce6;border-top:1px solid #d8dce6"></div>
<div class="a" style="left:445px;top:228px;width:105px;height:19px;background:#fff;border-left:1px solid #d8dce6;border-top:1px solid #d8dce6"></div>
<div class="a" style="left:550px;top:228px;width:105px;height:19px;background:#fff;border-left:1px solid #d8dce6;border-top:1px solid #d8dce6"></div>
<div class="t" style="left:550px;top:233px;width:102px;text-align:right;font-size:11px;color:#1a2240">0</div>
<div class="a" style="left:655px;top:228px;width:66px;height:19px;background:#e4e4e4;border-left:1px solid #d8dce6;border-top:1px solid #d8dce6"></div>
<div class="t" style="left:655px;top:233px;width:63px;text-align:right;font-size:11px;color:#1a2240">0</div>
<div class="a" style="left:236px;top:247px;width:105px;height:19px;background:linear-gradient(#eceff3 0%,#e3e7ed 48%,#dcdfe7 52%,#dde1e8 100%)"></div>
<div class="t" style="left:238px;top:252px;font-size:11px;color:#1f2c52">EW</div>
<div class="a" style="left:341px;top:247px;width:104px;height:19px;background:#fff;border-left:1px solid #d8dce6;border-top:1px solid #d8dce6"></div>
<div class="a" style="left:445px;top:247px;width:105px;height:19px;background:#fff;border-left:1px solid #d8dce6;border-top:1px solid #d8dce6"></div>
<div class="a" style="left:550px;top:247px;width:105px;height:19px;background:#fff;border-left:1px solid #d8dce6;border-top:1px solid #d8dce6"></div>
<div class="t" style="left:550px;top:252px;width:102px;text-align:right;font-size:11px;color:#1a2240">0</div>
<div class="a" style="left:655px;top:247px;width:66px;height:19px;background:#e4e4e4;border-left:1px solid #d8dce6;border-top:1px solid #d8dce6"></div>
<div class="t" style="left:655px;top:252px;width:63px;text-align:right;font-size:11px;color:#1a2240">0</div>
<div class="a" style="left:236px;top:266px;width:105px;height:19px;background:linear-gradient(#eceff3 0%,#e3e7ed 48%,#dcdfe7 52%,#dde1e8 100%)"></div>
<div class="t" style="left:238px;top:271px;font-size:11px;color:#1f2c52">FB</div>
<div class="a" style="left:341px;top:266px;width:104px;height:19px;background:#fff;border-left:1px solid #d8dce6;border-top:1px solid #d8dce6"></div>
<div class="t" style="left:341px;top:271px;width:101px;text-align:right;font-size:11px;color:#1a2240">0</div>
<div class="a" style="left:445px;top:266px;width:105px;height:19px;background:#fff;border-left:1px solid #d8dce6;border-top:1px solid #d8dce6"></div>
<div class="a" style="left:550px;top:266px;width:105px;height:19px;background:#fff;border-left:1px solid #d8dce6;border-top:1px solid #d8dce6"></div>
<div class="a" style="left:655px;top:266px;width:66px;height:19px;background:#e4e4e4;border-left:1px solid #d8dce6;border-top:1px solid #d8dce6"></div>
<div class="t" style="left:655px;top:271px;width:63px;text-align:right;font-size:11px;color:#1a2240">0</div>
<div class="a" style="left:236px;top:285px;width:105px;height:19px;background:linear-gradient(#eceff3 0%,#e3e7ed 48%,#dcdfe7 52%,#dde1e8 100%)"></div>
<div class="t" style="left:238px;top:290px;font-size:11px;color:#1f2c52">IZ</div>
<div class="a" style="left:341px;top:285px;width:104px;height:19px;background:#fff;border-left:1px solid #d8dce6;border-top:1px solid #d8dce6"></div>
<div class="t" style="left:341px;top:290px;width:101px;text-align:right;font-size:11px;color:#1a2240">0</div>
<div class="a" style="left:445px;top:285px;width:105px;height:19px;background:#fff;border-left:1px solid #d8dce6;border-top:1px solid #d8dce6"></div>
<div class="a" style="left:550px;top:285px;width:105px;height:19px;background:#fff;border-left:1px solid #d8dce6;border-top:1px solid #d8dce6"></div>
<div class="a" style="left:655px;top:285px;width:66px;height:19px;background:#e4e4e4;border-left:1px solid #d8dce6;border-top:1px solid #d8dce6"></div>
<div class="t" style="left:655px;top:290px;width:63px;text-align:right;font-size:11px;color:#1a2240">0</div>
<div class="a" style="left:236px;top:304px;width:105px;height:19px;background:linear-gradient(#eceff3 0%,#e3e7ed 48%,#dcdfe7 52%,#dde1e8 100%)"></div>
<div class="t" style="left:238px;top:309px;font-size:11px;color:#1f2c52">jk</div>
<div class="a" style="left:341px;top:304px;width:104px;height:19px;background:#fff;border-left:1px solid #d8dce6;border-top:1px solid #d8dce6"></div>
<div class="t" style="left:341px;top:309px;width:101px;text-align:right;font-size:11px;color:#1a2240">0</div>
<div class="a" style="left:445px;top:304px;width:105px;height:19px;background:#fff;border-left:1px solid #d8dce6;border-top:1px solid #d8dce6"></div>
<div class="a" style="left:550px;top:304px;width:105px;height:19px;background:#fff;border-left:1px solid #d8dce6;border-top:1px solid #d8dce6"></div>
<div class="a" style="left:655px;top:304px;width:66px;height:19px;background:#e4e4e4;border-left:1px solid #d8dce6;border-top:1px solid #d8dce6"></div>
<div class="t" style="left:655px;top:309px;width:63px;text-align:right;font-size:11px;color:#1a2240">0</div>
<div class="a" style="left:236px;top:323px;width:105px;height:19px;background:linear-gradient(#eceff3 0%,#e3e7ed 48%,#dcdfe7 52%,#dde1e8 100%)"></div>
<div class="t" style="left:238px;top:328px;font-size:11px;color:#1f2c52"></div>
<div class="a" style="left:341px;top:323px;width:104px;height:19px;background:#fff;border-left:1px solid #d8dce6;border-top:1px solid #d8dce6"></div>
<div class="a" style="left:445px;top:323px;width:105px;height:19px;background:#fff;border-left:1px solid #d8dce6;border-top:1px solid #d8dce6"></div>
<div class="a" style="left:550px;top:323px;width:105px;height:19px;background:#fff;border-left:1px solid #d8dce6;border-top:1px solid #d8dce6"></div>
<div class="a" style="left:655px;top:323px;width:66px;height:19px;background:#e4e4e4;border-left:1px solid #d8dce6;border-top:1px solid #d8dce6"></div>
</div>
<div class="a" style="left:563px;top:620px;width:2px;height:2px;background:#8a9ab8"></div>
<div class="a" style="left:567px;top:620px;width:2px;height:2px;background:#8a9ab8"></div>
<div class="a" style="left:571px;top:620px;width:2px;height:2px;background:#8a9ab8"></div>
<div class="a" style="left:575px;top:620px;width:2px;height:2px;background:#8a9ab8"></div>
<div class="t" style="left:482px;top:627px;font-size:11px;letter-spacing:2.2px;color:#1a2240">POKAŻ SZCZEGÓŁY [F8]</div>
</body></html>
